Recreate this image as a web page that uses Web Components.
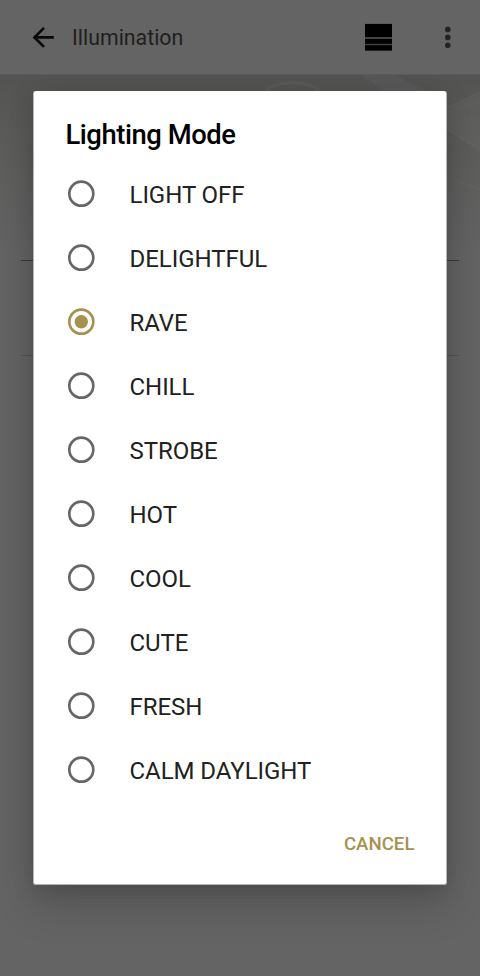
<!DOCTYPE html>
<html lang="en">
<head>
<meta charset="UTF-8">
<meta name="viewport" content="width=device-width, initial-scale=1">
<title>Illumination</title>
<style>
  body {
    margin: 0;
    background: #646464;
    font-family: Roboto, "Liberation Sans", sans-serif;
  }
</style>
</head>
<body>
<illumination-screen>
  <app-bar slot="bar">Illumination</app-bar>
  <mode-dialog slot="dialog">
    <span slot="title">Lighting Mode</span>
    <mode-option>LIGHT OFF</mode-option>
    <mode-option>DELIGHTFUL</mode-option>
    <mode-option checked>RAVE</mode-option>
    <mode-option>CHILL</mode-option>
    <mode-option>STROBE</mode-option>
    <mode-option>HOT</mode-option>
    <mode-option>COOL</mode-option>
    <mode-option>CUTE</mode-option>
    <mode-option>FRESH</mode-option>
    <mode-option>CALM DAYLIGHT</mode-option>
    <span slot="action">CANCEL</span>
  </mode-dialog>
</illumination-screen>

<script>
class AppBar extends HTMLElement {
  constructor() {
    super();
    this.attachShadow({ mode: 'open' });
    this.shadowRoot.innerHTML = `
      <style>
        :host {
          display: flex;
          align-items: center;
          box-sizing: border-box;
          position: relative;
          z-index: 1;
          height: 74px;
          padding: 0 17px 0 32px;
          background: #646464;
          color: #1f1f1f;
        }
        svg { display: block; flex: none; }
        .title {
          flex: 1;
          margin-left: 17px;
          padding-top: 2px;
          font-size: 21.33px;
          line-height: 28px;
        }
        .more { margin-left: 39px; }
      </style>
      <svg width="23" height="24" viewBox="0 0 23 24" fill="none" stroke="#080808" stroke-width="2.7">
        <path d="M21.8 12.4H3M12 2.9L2.5 12.4L12 21.9"/>
      </svg>
      <div class="title"><slot></slot></div>
      <svg width="27" height="28" viewBox="0 0 27 28">
        <path fill="#424242" d="M0 .8h27v27H0z"/>
        <path fill="#000" d="M0 1h27v13H0zM0 15.9h27v4.8H0zM0 22.2h27v5.2H0z"/>
      </svg>
      <svg class="more" width="32" height="32" viewBox="0 0 32 32" fill="#242424">
        <circle cx="16.8" cy="8.4" r="2.8"/>
        <circle cx="16.8" cy="16.4" r="2.8"/>
        <circle cx="16.8" cy="24.3" r="2.8"/>
      </svg>
    `;
  }
}

class ModeOption extends HTMLElement {
  static get observedAttributes() { return ['checked']; }

  constructor() {
    super();
    this.attachShadow({ mode: 'open' });
  }

  connectedCallback() { this.render(); }

  attributeChangedCallback() { this.render(); }

  render() {
    const checked = this.hasAttribute('checked');
    const color = checked ? '#a79150' : '#666';

    this.shadowRoot.innerHTML = `
      <style>
        :host {
          display: flex;
          align-items: center;
          height: 64px;
          padding-left: 33px;
          color: #212121;
          font-size: 24px;
          line-height: 28px;
          letter-spacing: -0.05px;
          cursor: pointer;
        }
        svg { display: block; flex: none; }
        .label { margin-left: 33.5px; padding-top: 2px; white-space: nowrap; }
      </style>
      <svg width="29" height="28" viewBox="0 0 29 28">
        <circle cx="14.3" cy="13.7" r="12" fill="none" stroke="${color}" stroke-width="2.67"/>
        ${checked ? `<circle cx="14.3" cy="13.7" r="6.7" fill="${color}"/>` : ''}
      </svg>
      <div class="label"><slot></slot></div>
    `;
  }
}

class ModeDialog extends HTMLElement {
  constructor() {
    super();
    this.attachShadow({ mode: 'open' });
    this.shadowRoot.innerHTML = `
      <style>
        :host {
          display: flex;
          flex-direction: column;
          box-sizing: border-box;
          width: 414px;
          height: 794px;
          border: solid #b4b4b4;
          border-width: 0 1px 1px;
          border-radius: 2.67px;
          background: #fff;
          box-shadow: 0 22px 40px rgba(0,0,0,0.16), 0 2px 24px rgba(0,0,0,0.14);
        }
        h2 {
          margin: 0;
          padding: 28px 32px 0 31.5px;
          height: 43px;
          color: #000;
          font-size: 27.4px;
          font-weight: 500;
          line-height: 32px;
          letter-spacing: -0.45px;
        }
        .actions {
          display: flex;
          justify-content: flex-end;
          padding: 30px 31.5px 0;
        }
        button {
          padding: 0;
          border: 0;
          background: none;
          color: #a79150;
          font: 500 18.67px/24px Roboto, "Liberation Sans", sans-serif;
        }
      </style>
      <h2><slot name="title"></slot></h2>
      <div class="list"><slot></slot></div>
      <div class="actions"><button><slot name="action"></slot></button></div>
    `;
  }
}

class IlluminationScreen extends HTMLElement {
  constructor() {
    super();
    this.attachShadow({ mode: 'open' });
    this.shadowRoot.innerHTML = `
      <style>
        :host {
          display: block;
          position: relative;
          height: 976px;
          overflow: hidden;
          background: #646464;
        }
        .hero {
          box-sizing: border-box;
          height: 186px;
          border-top: 1px solid #5b5b5a;
          background: linear-gradient(#535352, #5c5c5b 35%, #646464);
        }
        .hero svg { display: block; }
        .row {
          height: 94px;
          margin: 0 21px;
          border-top: 1px solid #3d3d3d;
        }
        .row + .row { border-top-color: #555; }
        .scrim {
          position: absolute;
          inset: 0;
          padding: 91px 0 0 33px;
        }
      </style>
      <slot name="bar"></slot>
      <div class="hero">
        <svg width="480" height="185" viewBox="0 0 480 185" fill="none">
          <path d="M264 18c7-12 44-15 57 0" stroke="#646461" stroke-width="3" opacity=".4"/>
          <path d="M362 0h32l50 24h-50z" fill="#686866" opacity=".3"/>
          <path d="M446 32l34-16v60l-34-21z" fill="#666664" opacity=".4"/>
          <path d="M446 54l34 21" stroke="#6b6b6b" opacity=".4"/>
          <path d="M446 34l34 5M446 36l34-16" stroke="#5a5a59" opacity=".4"/>
          <path d="M446 101l34 14" stroke="#6b6b6b" stroke-width="1.3" opacity=".4"/>
        </svg>
      </div>
      <div class="row"></div>
      <div class="row"></div>
      <div class="scrim"><slot name="dialog"></slot></div>
    `;
  }
}

customElements.define('app-bar', AppBar);
customElements.define('mode-option', ModeOption);
customElements.define('mode-dialog', ModeDialog);
customElements.define('illumination-screen', IlluminationScreen);
</script>
</body>
</html>
